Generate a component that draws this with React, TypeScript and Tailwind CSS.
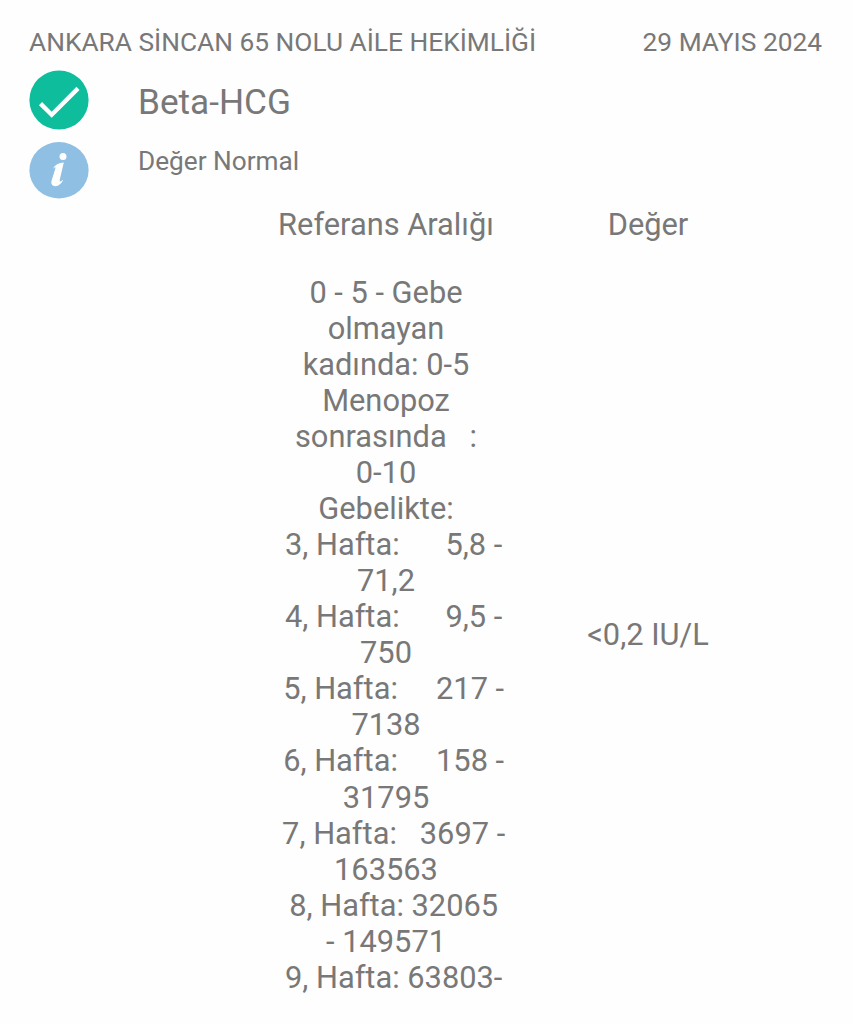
const referenceLines = [
  '0 - 5 - Gebe',
  'olmayan',
  'kadında: 0-5',
  'Menopoz',
  'sonrasında   :',
  '0-10',
  'Gebelikte:',
  '  3, Hafta:      5,8 -',
  '71,2',
  '  4, Hafta:      9,5 -',
  '750',
  '  5, Hafta:     217 -',
  '7138',
  '  6, Hafta:     158 -',
  '31795',
  '  7, Hafta:   3697 -',
  '163563',
  '  8, Hafta: 32065',
  '- 149571',
  '  9, Hafta: 63803-',
];

const CheckIcon = () => (
  <svg className="h-[60px] w-[60px] shrink-0" viewBox="0 0 60 60" fill="none">
    <circle cx="30" cy="30" r="29.6" fill="#0dbd9b" />
    <path d="M11.5 33.6 L22.7 44.7 L49 18.4" stroke="#fff" strokeWidth="4.4" />
  </svg>
);

const InfoIcon = () => (
  <svg className="h-[57px] w-[60px] shrink-0" viewBox="0 0 60 57">
    <ellipse cx="30" cy="28.3" rx="29.6" ry="28.2" fill="#8fbfe3" />
    <circle cx="34" cy="14.6" r="3.5" fill="#fff" />
    <path
      d="M23.8 27 C26 23 29.5 21 34.8 20.6 L30.8 37.4 C30.2 40.2 31.5 40.2 34.2 37.6 C32.8 41.6 29.6 44.2 26.6 44.2 C23 44.2 21.8 41.8 22.6 38.6 L26.2 27 C26.9 24.6 26 25 23.8 27 Z"
      fill="#fff"
    />
  </svg>
);

export default function App() {
  return (
    <div className="h-screen overflow-hidden bg-[#fefefe] font-[Roboto,sans-serif] text-[#787878]">
      <header className="flex justify-between pt-6 pr-[31px] pl-[29px] text-[26.3px] leading-9 whitespace-nowrap">
        <h1>ANKARA SİNCAN 65 NOLU AİLE HEKİMLİĞİ</h1>
        <span>29 MAYIS 2024</span>
      </header>

      <section className="flex flex-col gap-3 pt-2.5 pl-[29px]">
        <div className="flex h-[60px] gap-[49px]">
          <CheckIcon />
          <h2 className="pt-3 text-[35.2px] leading-10">Beta-HCG</h2>
        </div>
        <div className="flex h-[57px] gap-[49px]">
          <InfoIcon />
          <p className="pt-1 text-[26.2px] leading-[30px]">Değer Normal</p>
        </div>
      </section>

      <section className="grid grid-cols-[262px_262px] pt-2 pl-[255px] text-center text-[30.8px] leading-[36.07px]">
        <h3>Referans Aralığı</h3>
        <h3>Değer</h3>
        <div className="pt-[31.6px]">
          {referenceLines.map((line, i) => (
            <p key={i} className="whitespace-pre">{line}</p>
          ))}
        </div>
        <p className="flex items-center justify-center pt-[31.6px]">{'<0,2 IU/L'}</p>
      </section>
    </div>
  );
}
